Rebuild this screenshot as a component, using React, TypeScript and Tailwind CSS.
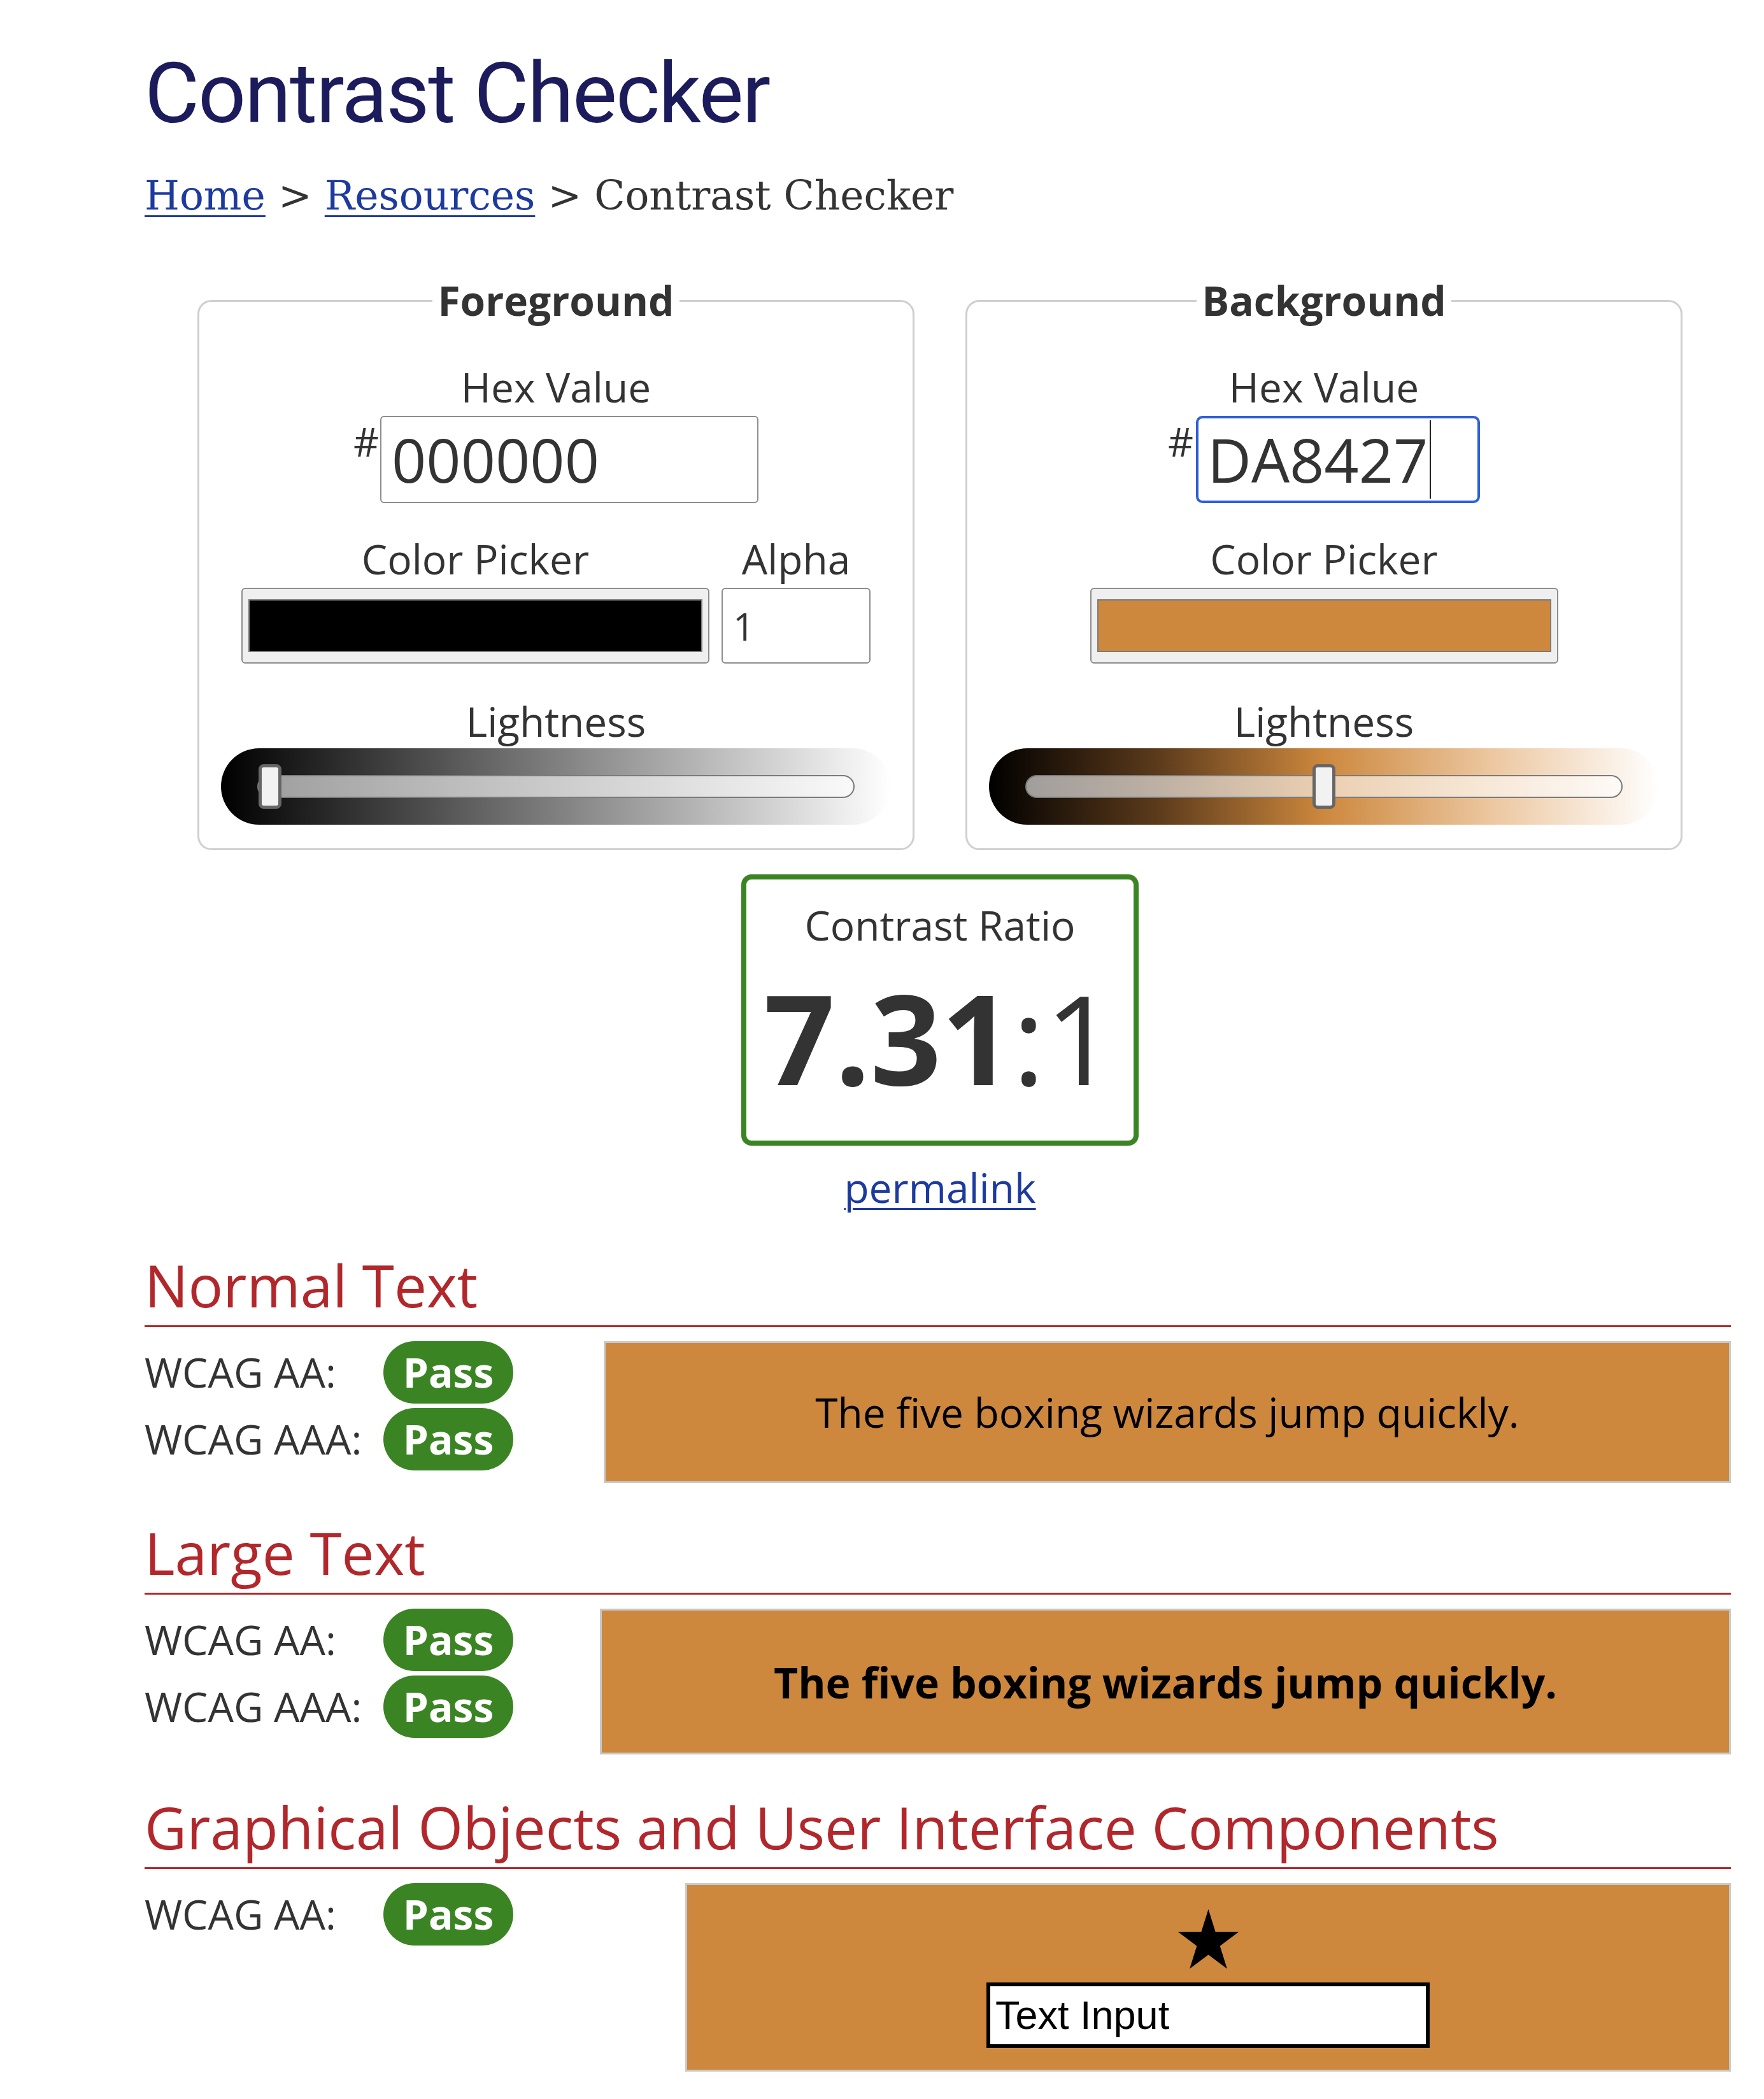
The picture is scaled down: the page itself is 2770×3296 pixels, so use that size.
import type { ReactNode } from 'react';

function Label({ children }: { children: ReactNode }) {
  return <div className="text-[64px] leading-[60px] text-[#333]">{children}</div>;
}

function ColorSwatch({ fill }: { fill: string }) {
  return (
    <div className="h-[119px] w-[735px] rounded-[6px] border-2 border-[#8d8d8d] bg-[#efefef] px-[9px] py-[16px]">
      <div className={`h-full border-2 border-[#7b7b7b] ${fill}`} />
    </div>
  );
}

function LightnessSlider({ gradient, thumbPos }: { gradient: string; thumbPos: string }) {
  return (
    <div className={`flex h-[120px] items-center rounded-full px-[57px] ${gradient}`}>
      <div className="relative h-[36px] flex-1 rounded-full border-2 border-[#7a7a7a] bg-white/60">
        <div
          className={`absolute top-1/2 h-[70px] w-[36px] -translate-y-1/2 rounded-[8px] border-[5px] border-[#666] bg-[#f2f2f2] ${thumbPos}`}
        />
      </div>
    </div>
  );
}

function PassBadge() {
  return (
    <div className="flex h-[98px] w-[204px] items-center justify-center rounded-full bg-[#3b8424] text-[64px] font-bold leading-none text-white">
      Pass
    </div>
  );
}

function Results({ rows, width }: { rows: string[]; width: string }) {
  return (
    <div className={`grid grid-cols-[375px_204px] items-center gap-y-[7px] ${width}`}>
      {rows.map((r) => (
        <div key={r} className="contents">
          <div className="text-[64px] leading-none text-[#333]">{r}</div>
          <PassBadge />
        </div>
      ))}
    </div>
  );
}

function SectionHeading({ children, mt }: { children: ReactNode; mt: string }) {
  return (
    <h2
      className={`border-b-[3px] border-[#b1272b] pb-[17px] text-[91px] font-normal leading-none text-[#b1272b] ${mt}`}
    >
      {children}
    </h2>
  );
}

export default function App() {
  return (
    <div className="min-h-[3296px] w-[2770px] bg-white font-['Open_Sans',sans-serif]">
      <div className="w-[2718px] pl-[227px] pt-[81px]">
        {/* Title + breadcrumb */}
        <h1 className="font-[Roboto,sans-serif] text-[132px] font-normal leading-none tracking-[-2px] text-[#1c1b5b]">
          Contrast Checker
        </h1>
        <nav className="mt-[63px] font-['DejaVu_Serif',serif] text-[63px] leading-none text-[#333]">
          <a href="#" className="text-[#1d3a9e] underline decoration-[3px] underline-offset-[9px]">
            Home
          </a>{' '}
          &gt;{' '}
          <a href="#" className="text-[#1d3a9e] underline decoration-[3px] underline-offset-[9px]">
            Resources
          </a>{' '}
          &gt; Contrast Checker
        </nav>

        {/* Color panels */}
        <div className="ml-[83px] w-[2332px]">
          <div className="mt-[101px] flex gap-[80px]">
            <fieldset className="w-[1126px] rounded-[22px] border-[3px] border-[#cfcfcf] px-[34px] pb-[37px] pt-[74px]">
              <legend className="mx-auto px-[8px] text-[64px] font-bold leading-none text-[#333]">Foreground</legend>
              <div className="flex flex-col items-center">
                <Label>Hex Value</Label>
                <div className="mt-[15px] flex items-start">
                  <span className="mr-[2px] mt-[9px] text-[62px] leading-none text-[#333]">#</span>
                  <div className="flex h-[137px] w-[594px] items-center rounded-[6px] border-2 border-[#8d8d8d] pl-[16px] text-[95px] leading-none text-[#333]">
                    000000
                  </div>
                </div>
              </div>
              <div className="mt-[58px] flex justify-center gap-[19px]">
                <div className="flex flex-col items-center">
                  <Label>Color Picker</Label>
                  <div className="mt-[15px]">
                    <ColorSwatch fill="bg-black" />
                  </div>
                </div>
                <div className="flex flex-col items-center">
                  <Label>Alpha</Label>
                  <div className="mt-[15px] flex h-[119px] w-[234px] items-center rounded-[6px] border-2 border-[#8d8d8d] pl-[16px] text-[60px] leading-none text-[#333]">
                    1
                  </div>
                </div>
              </div>
              <div className="mt-[61px] flex justify-center">
                <Label>Lightness</Label>
              </div>
              <div className="mt-[12px]">
                <LightnessSlider gradient="bg-[linear-gradient(to_right,#000,#fff)]" thumbPos="left-0" />
              </div>
            </fieldset>

            <fieldset className="w-[1126px] rounded-[22px] border-[3px] border-[#cfcfcf] px-[34px] pb-[37px] pt-[74px]">
              <legend className="mx-auto px-[8px] text-[64px] font-bold leading-none text-[#333]">Background</legend>
              <div className="flex flex-col items-center">
                <Label>Hex Value</Label>
                <div className="mt-[15px] flex items-start">
                  <span className="mr-[4px] mt-[9px] text-[62px] leading-none text-[#333]">#</span>
                  <div className="flex h-[137px] w-[446px] items-center rounded-[10px] border-[4px] border-[#2e5fd6] pl-[14px] text-[95px] leading-none text-[#333]">
                    DA8427
                    <span className="ml-[3px] h-[123px] w-[2px] bg-[#222]" />
                  </div>
                </div>
              </div>
              <div className="mt-[58px] flex flex-col items-center">
                <Label>Color Picker</Label>
                <div className="mt-[15px]">
                  <ColorSwatch fill="bg-[#cd883e]" />
                </div>
              </div>
              <div className="mt-[61px] flex justify-center">
                <Label>Lightness</Label>
              </div>
              <div className="mt-[12px]">
                <LightnessSlider
                  gradient="bg-[linear-gradient(to_right,#000_0%,#5b3a1b_25%,#cd883e_50%,#ecc7a0_75%,#fff_100%)]"
                  thumbPos="left-1/2 -translate-x-1/2"
                />
              </div>
            </fieldset>
          </div>

          {/* Contrast ratio */}
          <div className="flex flex-col items-center">
            <div className="mt-[38px] flex h-[426px] w-[624px] flex-col items-center rounded-[16px] border-[8px] border-[#3b8424]">
              <div className="mt-[40px] text-[64px] leading-none text-[#333]">Contrast Ratio</div>
              <div className="mt-[46px] text-[195px] leading-none text-[#333]">
                <span className="font-bold">7.31</span>:1
              </div>
            </div>
            <a
              href="#"
              className="mt-[34px] text-[64px] leading-none text-[#1d3a9e] underline decoration-[3px] underline-offset-[8px]"
            >
              permalink
            </a>
          </div>
        </div>

        {/* Normal text */}
        <SectionHeading mt="mt-[76px]">Normal Text</SectionHeading>
        <div className="mt-[22px] flex items-start">
          <Results rows={['WCAG AA:', 'WCAG AAA:']} width="w-[721px]" />
          <div className="flex h-[223px] flex-1 items-center justify-center border-[3px] border-[#c9c9c9] bg-[#cd883e] text-[64px] leading-none text-black">
            The five boxing wizards jump quickly.
          </div>
        </div>

        {/* Large text */}
        <SectionHeading mt="mt-[64px]">Large Text</SectionHeading>
        <div className="mt-[22px] flex items-start">
          <Results rows={['WCAG AA:', 'WCAG AAA:']} width="w-[715px]" />
          <div className="flex h-[229px] flex-1 items-center justify-center border-[3px] border-[#c9c9c9] bg-[#cd883e] text-[66px] font-bold leading-none text-black">
            The five boxing wizards jump quickly.
          </div>
        </div>

        {/* Graphical objects */}
        <SectionHeading mt="mt-[69px]">Graphical Objects and User Interface Components</SectionHeading>
        <div className="mt-[22px] flex items-start">
          <Results rows={['WCAG AA:']} width="w-[849px]" />
          <div className="flex h-[296px] flex-1 flex-col items-center border-[3px] border-[#c9c9c9] bg-[#cd883e]">
            <svg className="mt-[38px]" width="95" height="94" viewBox="0 0 95 91" preserveAspectRatio="none">
              <polygon
                fill="#000"
                points="47.5,0 58.7,34.5 95,34.5 65.7,55.9 76.9,90.5 47.5,69.1 18.1,90.5 29.3,55.9 0,34.5 36.3,34.5"
              />
            </svg>
            <div className="mt-[21px] flex h-[103px] w-[696px] items-center border-[6px] border-black bg-white pl-[8px] font-['Liberation_Sans',Arial,sans-serif] text-[63px] leading-none text-black">
              Text Input
            </div>
          </div>
        </div>
      </div>
    </div>
  );
}
